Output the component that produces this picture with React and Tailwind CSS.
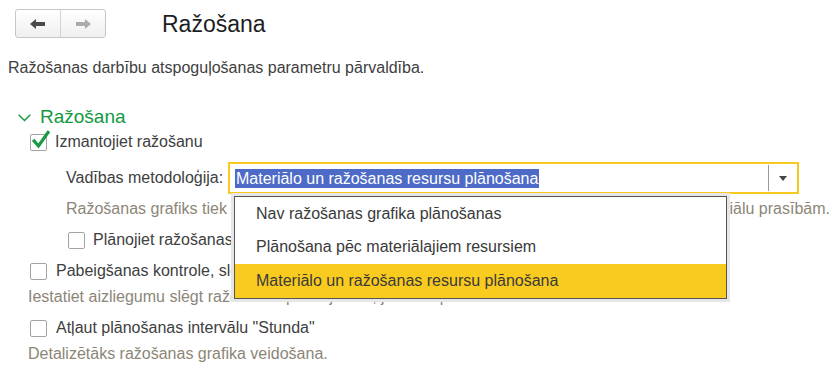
import React from "react";

const font = { fontFamily: '"Liberation Sans", Arial, sans-serif' };

function Box({ checked }) {
  return (
    <span className="relative inline-block w-[17px] h-[17px] shrink-0 rounded-[2px] border border-[#a3a3a3] bg-white">
      {checked && (
        <svg className="absolute left-[1px] top-[-5px]" width="18" height="20" viewBox="0 0 18 20">
          <path d="M2.2 11 L6.5 16 L16 2.5" fill="none" stroke="#1a9a42" strokeWidth="3.2" strokeLinecap="square" />
        </svg>
      )}
    </span>
  );
}

export default function App() {
  return (
    <div className="relative w-[832px] h-[375px] overflow-hidden bg-white text-[#404040]" style={font}>
      {/* header */}
      <div className="flex items-center pt-[9px] pl-[15px]">
        <div className="flex h-[29px] w-[91px] rounded-[3px] border border-[#c6c6c6] bg-gradient-to-b from-white to-[#efefef]">
          <div className="flex flex-1 items-center justify-center border-r border-[#d4d4d4]">
            <svg width="16" height="10" viewBox="0 0 16 10">
              <path d="M0 5 L6 0 L6 3 L15 3 L15 7 L6 7 L6 10 Z" fill="#4a4a4a" />
            </svg>
          </div>
          <div className="flex flex-1 items-center justify-center">
            <svg width="16" height="10" viewBox="0 0 16 10">
              <path d="M16 5 L10 0 L10 3 L1 3 L1 7 L10 7 L10 10 Z" fill="#ababab" />
            </svg>
          </div>
        </div>
        <div className="ml-[56px] text-[23px] leading-[28px] text-[#1e1e1e]">Ražošana</div>
      </div>

      <div className="mt-[21px] pl-[8px] text-[16px] leading-[18px] whitespace-nowrap">
        Ražošanas darbību atspoguļošanas parametru pārvaldība.
      </div>

      {/* section */}
      <div className="mt-[29px] flex items-center pl-[18px] text-[19px] leading-[22px] text-[#14993f]">
        <svg width="13" height="8" viewBox="0 0 13 8" className="mt-[1px]">
          <path d="M0.7 0.7 L6.5 6.5 L12.3 0.7" fill="none" stroke="#14993f" strokeWidth="1.4" />
        </svg>
        <span className="ml-[9px]">Ražošana</span>
      </div>

      <div className="mt-[2px] flex h-[24px] items-center pl-[30px] text-[16px]">
        <Box checked />
        <span className="ml-[8px]">Izmantojiet ražošanu</span>
      </div>

      <div className="mt-[8px] flex items-center pl-[66px] text-[16px]">
        <span className="w-[162px] whitespace-nowrap">Vadības metodoloģija:</span>
        <div className="relative">
          <div className="flex h-[32px] w-[571px] items-center border-2 border-[#f8c91e] bg-white">
            <div className="flex flex-1 items-center pl-[5px]">
              <span className="bg-[#4d6bc6] text-white leading-[19px] px-[1px] whitespace-nowrap">
                Materiālo un ražošanas resursu plānošana
              </span>
            </div>
            <div className="h-[26px] w-px bg-[#9a9a9a]" />
            <div className="flex w-[28px] items-center justify-center">
              <svg width="8" height="5" viewBox="0 0 8 5">
                <path d="M0 0 L8 0 L4 5 Z" fill="#444" />
              </svg>
            </div>
          </div>
          {/* dropdown */}
          <div className="absolute left-[3px] top-[31px] z-10 w-[499px] border-[3px] border-[#e6e6e6]">
            <div className="border border-[#555] bg-white text-[16px] text-[#3a3a3a]">
              <div className="flex h-[33px] items-center pl-[21px]">Nav ražošanas grafika plānošanas</div>
              <div className="flex h-[34px] items-center pl-[21px]">Plānošana pēc materiālajiem resursiem</div>
              <div className="flex h-[34px] items-center bg-[#f9cb1f] pl-[21px]">Materiālo un ražošanas resursu plānošana</div>
            </div>
          </div>
        </div>
      </div>

      <div className="mt-[6px] pl-[66px] text-[16px] leading-[18px] whitespace-nowrap text-[#8c8677]">
        Ražošanas grafiks tiek plānots, ņemot vērā arī ražošanas jaudu, resursu pieejamību un materiālu prasībām.
      </div>

      <div className="mt-[10px] flex h-[24px] items-center pl-[68px] text-[16px]">
        <Box />
        <span className="ml-[8px] whitespace-nowrap">Plānojiet ražošanas operācijas</span>
      </div>

      <div className="mt-[7px] flex h-[24px] items-center pl-[30px] text-[16px]">
        <Box />
        <span className="ml-[9px] whitespace-nowrap">Pabeigšanas kontrole, slēgšana</span>
      </div>

      <div className="mt-[5px] pl-[28px] text-[16px] leading-[18px] whitespace-nowrap text-[#8c8677]">
        Iestatiet aizliegumu slēgt ražošanas pasūtījumus, ja nav izpildes
      </div>

      <div className="mt-[10px] flex h-[24px] items-center pl-[30px] text-[16px]">
        <Box />
        <span className="ml-[9px]">Atļaut plānošanas intervālu "Stunda"</span>
      </div>

      <div className="mt-[5px] pl-[28px] text-[16px] leading-[18px] whitespace-nowrap text-[#8c8677]">
        Detalizētāks ražošanas grafika veidošana.
      </div>
    </div>
  );
}
